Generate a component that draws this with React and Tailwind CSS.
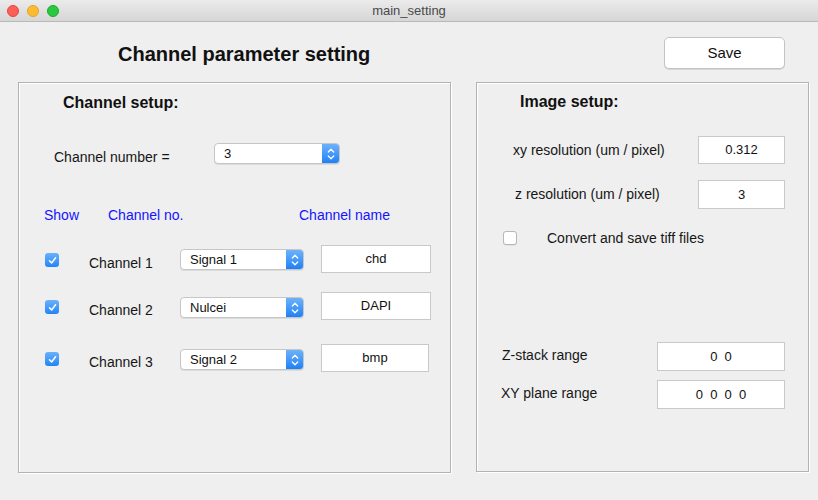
import React from "react";

// Finestra "main_setting": impostazione parametri dei canali

const channels = [
  { label: "Channel 1", signal: "Signal 1", name: "chd", top: "mt-[79px]", textW: "w-[110px]" },
  { label: "Channel 2", signal: "Nulcei", name: "DAPI", top: "mt-[19px]", textW: "w-[110px]" },
  { label: "Channel 3", signal: "Signal 2", name: "bmp", top: "mt-[24px]", textW: "w-[108px]" },
];

function TrafficLights() {
  return (
    <div className="flex items-center gap-[8px] pl-[7px]">
      <span className="w-[12px] h-[12px] rounded-full bg-[#fc5f57] border border-[#df4744]" />
      <span className="w-[12px] h-[12px] rounded-full bg-[#fdbc2e] border border-[#dea236]" />
      <span className="w-[12px] h-[12px] rounded-full bg-[#28c840] border border-[#1aab29]" />
    </div>
  );
}

function Checkbox({ checked }) {
  if (!checked) {
    return (
      <span className="block w-[14px] h-[14px] rounded-[3px] bg-white border border-[#b8b8b8] shadow-[0_0.5px_0.5px_rgba(0,0,0,0.1)]" />
    );
  }
  return (
    <span className="flex items-center justify-center w-[14px] h-[14px] rounded-[3px] bg-gradient-to-b from-[#69b1fa] to-[#1f84f8]">
      <svg width="9" height="9" viewBox="0 0 9 9" fill="none">
        <path d="M1.5 4.8 L3.6 7 L7.6 1.8" stroke="#fff" strokeWidth="1.5" strokeLinecap="round" strokeLinejoin="round" />
      </svg>
    </span>
  );
}

function Select({ value, width }) {
  return (
    <div className={`flex h-[21px] ${width} rounded-[4px] bg-white border border-[#c6c6c6] shadow-[0_1px_0.5px_rgba(0,0,0,0.08)] overflow-hidden`}>
      <span className="flex-1 pl-[9px] text-[13px] leading-[19px] text-[#111]">{value}</span>
      <span className="flex flex-col items-center justify-center gap-[2px] w-[17px] bg-gradient-to-b from-[#6bb2fb] to-[#1c80f6]">
        <svg width="8" height="5" viewBox="0 0 8 5" fill="none">
          <path d="M1.3 4 L4 1.3 L6.7 4" stroke="#fff" strokeWidth="1.3" strokeLinecap="round" strokeLinejoin="round" />
        </svg>
        <svg width="8" height="5" viewBox="0 0 8 5" fill="none">
          <path d="M1.3 1 L4 3.7 L6.7 1" stroke="#fff" strokeWidth="1.3" strokeLinecap="round" strokeLinejoin="round" />
        </svg>
      </span>
    </div>
  );
}

function TextBox({ value, className }) {
  return (
    <div className={`flex items-center justify-center bg-white border border-[#c9c9c9] text-[13px] text-[#111] ${className}`}>
      {value}
    </div>
  );
}

export default function App() {
  return (
    <div className="w-[818px] h-[500px] overflow-hidden bg-[#efefef] font-['Liberation_Sans',Arial,sans-serif] text-[#161616]">
      {/* Barra del titolo */}
      <div className="grid grid-cols-[1fr_auto_1fr] items-center h-[22px] bg-gradient-to-b from-[#ebebeb] to-[#d6d6d6] border-b border-[#b9b9b9]">
        <TrafficLights />
        <span className="text-[13px] text-[#4a4a4a]">main_setting</span>
        <span />
      </div>

      {/* Intestazione */}
      <div className="flex items-start h-[60px]">
        <h1 className="ml-[118px] mt-[20px] text-[20px] leading-[24px] font-bold text-[#111]">
          Channel parameter setting
        </h1>
        <button className="ml-auto mr-[33px] mt-[15px] w-[121px] h-[32px] rounded-[5px] bg-white border border-[#c3c3c3] shadow-[0_1px_0.5px_rgba(0,0,0,0.1)] text-[15px] text-[#111]">
          Save
        </button>
      </div>

      {/* Pannelli */}
      <div className="flex gap-[25px] pl-[18px]">
        {/* Channel setup */}
        <div className="flex flex-col w-[433px] h-[391px] border border-[#b2b2b2] shadow-[inset_1px_1px_0_#fff,1px_1px_0_#fff]">
          <h2 className="ml-[44px] mt-[11px] text-[16px] leading-[18px] font-bold text-[#111]">Channel setup:</h2>

          <div className="flex items-start h-[21px] mt-[31px]">
            <span className="ml-[35px] mt-[5px] w-[160px] text-[14px] leading-[18px]">Channel number =</span>
            <Select value="3" width="w-[126px]" />
          </div>

          <div className="flex h-[18px] mt-[42px] text-[14px] leading-[18px] text-[#1414ff]">
            <span className="ml-[25px] w-[64px]">Show</span>
            <span className="w-[191px]">Channel no.</span>
            <span>Channel name</span>
          </div>

          {channels.map((c, i) => (
            <div key={c.label} className={`flex items-start h-[28px] ${i === 0 ? "mt-[21px]" : c.top}`}>
              <div className="ml-[26px] mt-[8px]">
                <Checkbox checked />
              </div>
              <span className="ml-[30px] mt-[9px] w-[91px] text-[14px] leading-[18px]">{c.label}</span>
              <div className={i === 0 ? "mt-[4px]" : "mt-[5px]"}>
                <Select value={c.signal} width="w-[124px]" />
              </div>
              <TextBox value={c.name} className={`ml-[17px] h-[28px] ${c.textW}`} />
            </div>
          ))}
        </div>

        {/* Image setup */}
        <div className="flex flex-col w-[333px] h-[390px] border border-[#b2b2b2] shadow-[inset_1px_1px_0_#fff,1px_1px_0_#fff]">
          <h2 className="ml-[43px] mt-[10px] text-[16px] leading-[18px] font-bold text-[#111]">Image setup:</h2>

          <div className="flex items-center h-[28px] mt-[25px]">
            <span className="ml-[36px] text-[14px]">xy resolution (um / pixel)</span>
            <TextBox value="0.312" className="ml-auto mr-[23px] w-[87px] h-[28px]" />
          </div>
          <div className="flex items-center h-[29px] mt-[16px]">
            <span className="ml-[38px] text-[14px]">z resolution (um / pixel)</span>
            <TextBox value="3" className="ml-auto mr-[23px] w-[87px] h-[29px]" />
          </div>

          <div className="flex items-center mt-[20px]">
            <div className="ml-[26px]">
              <Checkbox checked={false} />
            </div>
            <span className="ml-[30px] text-[14px] leading-[18px]">Convert and save tiff files</span>
          </div>

          <div className="flex items-start h-[29px] mt-[95px]">
            <span className="ml-[25px] mt-[4px] w-[155px] text-[14px] leading-[18px]">Z-stack range</span>
            <TextBox value="0  0" className="w-[128px] h-[29px] whitespace-pre" />
          </div>
          <div className="flex items-start h-[29px] mt-[9px]">
            <span className="ml-[24px] mt-[4px] w-[156px] text-[14px] leading-[18px]">XY plane range</span>
            <TextBox value="0  0  0  0" className="w-[128px] h-[29px] whitespace-pre" />
          </div>
        </div>
      </div>
    </div>
  );
}
